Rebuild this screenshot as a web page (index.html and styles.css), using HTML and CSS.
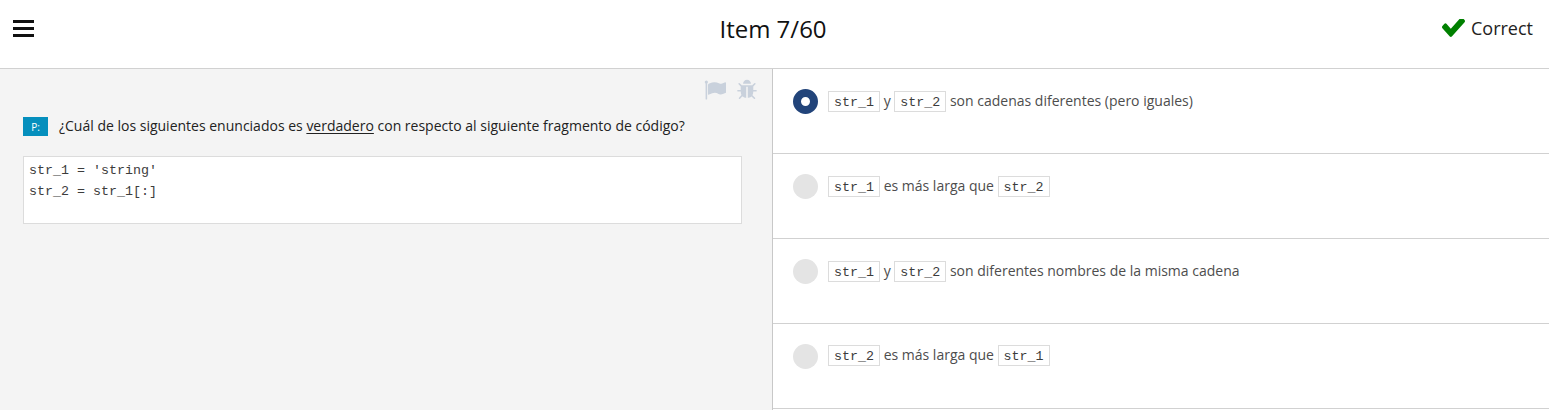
FILE: index.html
```html
<!DOCTYPE html>
<html lang="es">
<head>
<meta charset="utf-8">
<title>Item 7/60</title>
<link rel="stylesheet" href="styles.css">
</head>
<body>
<header class="topbar">
  <div class="menu" aria-label="Menu"><span></span><span></span><span></span></div>
  <h1 class="title">Item 7/60</h1>
  <div class="status">
    <svg class="check" viewBox="121 434 1550 1088" preserveAspectRatio="none"><path d="M1671 566q0 40-28 68l-724 724-136 136q-28 28-68 28t-68-28l-136-136-362-362q-28-28-28-68t28-68l136-136q28-28 68-28t68 28l294 295 656-657q28-28 68-28t68 28l136 136q28 28 28 68z"/></svg>
    <span>Correct</span>
  </div>
</header>
<main class="content">
  <section class="question">
    <div class="tools">
      <svg class="tool" viewBox="0 0 1792 1792"><path d="M320 256q0 72-64 110v1266q0 13-9.5 22.5t-22.5 9.5h-64q-13 0-22.5-9.5t-9.5-22.5v-1266q-64-38-64-110 0-53 37.5-90.5t90.5-37.5 90.5 37.5 37.5 90.5zm1472 64v763q0 25-12.5 38.5t-39.5 27.5q-215 116-369 116-61 0-123.5-22t-108.5-48-115.5-48-142.5-22q-192 0-464 146-17 9-33 9-26 0-45-19t-19-45v-742q0-32 31-55 21-14 79-43 236-120 421-120 107 0 200 29t219 88q38 19 88 19 54 0 117.5-21t110-47 88-47 54.5-21q26 0 45 19t19 45z"/></svg>
      <svg class="tool" viewBox="0 0 1792 1792"><path d="M1696 960q0 26-19 45t-45 19h-224q0 171-67 290l208 209q19 19 19 45t-19 45q-18 19-45 19t-45-19l-198-197q-5 5-15 13t-42 28.5-65 36.5-82 29-97 13v-896h-128v896q-51 0-101.5-13.5t-87-33-66-39-43.5-32.5l-15-14-183 207q-20 21-48 21-24 0-43-16-19-18-20.5-44.5t15.5-46.5l202-227q-58-114-58-274h-224q-26 0-45-19t-19-45 19-45 45-19h224v-294l-173-173q-19-19-19-45t19-45 45-19 45 19l173 173h844l173-173q19-19 45-19t45 19 19 45-19 45l-173 173v294h224q26 0 45 19t19 45zm-480-576h-640q0-133 93.5-226.5t226.5-93.5 226.5 93.5 93.5 226.5z"/></svg>
    </div>
    <div class="prompt">
      <span class="tag">P:</span>
      <p class="prompt-text">¿Cuál de los siguientes enunciados es <u>verdadero</u> con respecto al siguiente fragmento de código?</p>
    </div>
    <pre class="snippet">str_1 = 'string'
str_2 = str_1[:]</pre>
  </section>
  <section class="answers">
    <div class="answer">
      <span class="radio selected"></span>
      <p class="answer-text"><code>str_1</code> y <code>str_2</code> son cadenas diferentes (pero iguales)</p>
    </div>
    <div class="answer">
      <span class="radio"></span>
      <p class="answer-text"><code>str_1</code> es más larga que <code>str_2</code></p>
    </div>
    <div class="answer">
      <span class="radio"></span>
      <p class="answer-text"><code>str_1</code> y <code>str_2</code> son diferentes nombres de la misma cadena</p>
    </div>
    <div class="answer">
      <span class="radio"></span>
      <p class="answer-text"><code>str_2</code> es más larga que <code>str_1</code></p>
    </div>
  </section>
</main>
</body>
</html>
```
FILE: styles.css
```css
* { box-sizing: border-box; }
body {
  margin: 0;
  height: 410px;
  overflow: hidden;
  display: flex;
  flex-direction: column;
  background: #fff;
  color: #222;
  font-family: "Open Sans", sans-serif;
  font-size: 14px;
}
p, h1, pre { margin: 0; }
.topbar {
  display: grid;
  grid-template-columns: 1fr auto 1fr;
  align-items: start;
  height: 69px;
  flex: none;
  padding: 0 16px 0 13px;
  border-bottom: 1px solid #d1d1d1;
}
.menu {
  display: flex;
  flex-direction: column;
  gap: 4px;
  padding-top: 20px;
}
.menu span {
  width: 21px;
  height: 3px;
  background: #111;
}
.title {
  padding-top: 12px;
  font-size: 24px;
  line-height: 34px;
  font-weight: 400;
  color: #111;
}
.status {
  display: flex;
  justify-content: flex-end;
  align-items: center;
  gap: 6px;
  padding-top: 16px;
  font-size: 18px;
  line-height: 25px;
}
.check { width: 23px; height: 18px; margin-bottom: 1px; fill: #008000; }
.content { display: flex; height: 341px; }
.question {
  width: 773px;
  flex: none;
  background: #f4f4f4;
  border-right: 1px solid #c8c8c8;
}
.tools {
  display: flex;
  justify-content: flex-end;
  gap: 10px;
  height: 32px;
  padding: 10px 14.5px 0 0;
}
.tool { width: 22px; height: 22px; fill: #c9d1dc; }
.prompt {
  display: flex;
  align-items: center;
  gap: 11px;
  padding: 15px 0 0 23px;
}
.tag {
  width: 25px;
  height: 19px;
  background: #058fbd;
  color: #fff;
  font-size: 10px;
  line-height: 20px;
  text-align: center;
}
.prompt-text { line-height: 20px; }
.prompt-text u { text-underline-offset: 2px; }
.snippet {
  margin: 20px 30px 0 23px;
  height: 68px;
  padding: 3px 5px;
  background: #fff;
  border: 1px solid #dcdcdc;
  color: #3c3c3c;
  font: 13.33px/21px "Liberation Mono", monospace;
}
.answers { flex: 1; }
.answer {
  display: flex;
  align-items: flex-start;
  gap: 10px;
  height: 85px;
  padding: 20px 0 0 20px;
  border-bottom: 1px solid #d1d1d1;
}
.radio {
  width: 25px;
  height: 25px;
  border-radius: 50%;
  background: #e4e4e4;
}
.radio.selected { background: #fff; border: 8.5px solid #22447a; }
.answer-text { margin-top: -1px; line-height: 25px; color: #4d4d4d; }
.answer:last-child .answer-text { margin-top: -2px; }
.answer-text code {
  display: inline-block;
  height: 21px;
  padding: 0 5px;
  border: 1px solid #dcdcdc;
  color: #3c3c3c;
  font: 13.33px/21px "Liberation Mono", monospace;
}
```
